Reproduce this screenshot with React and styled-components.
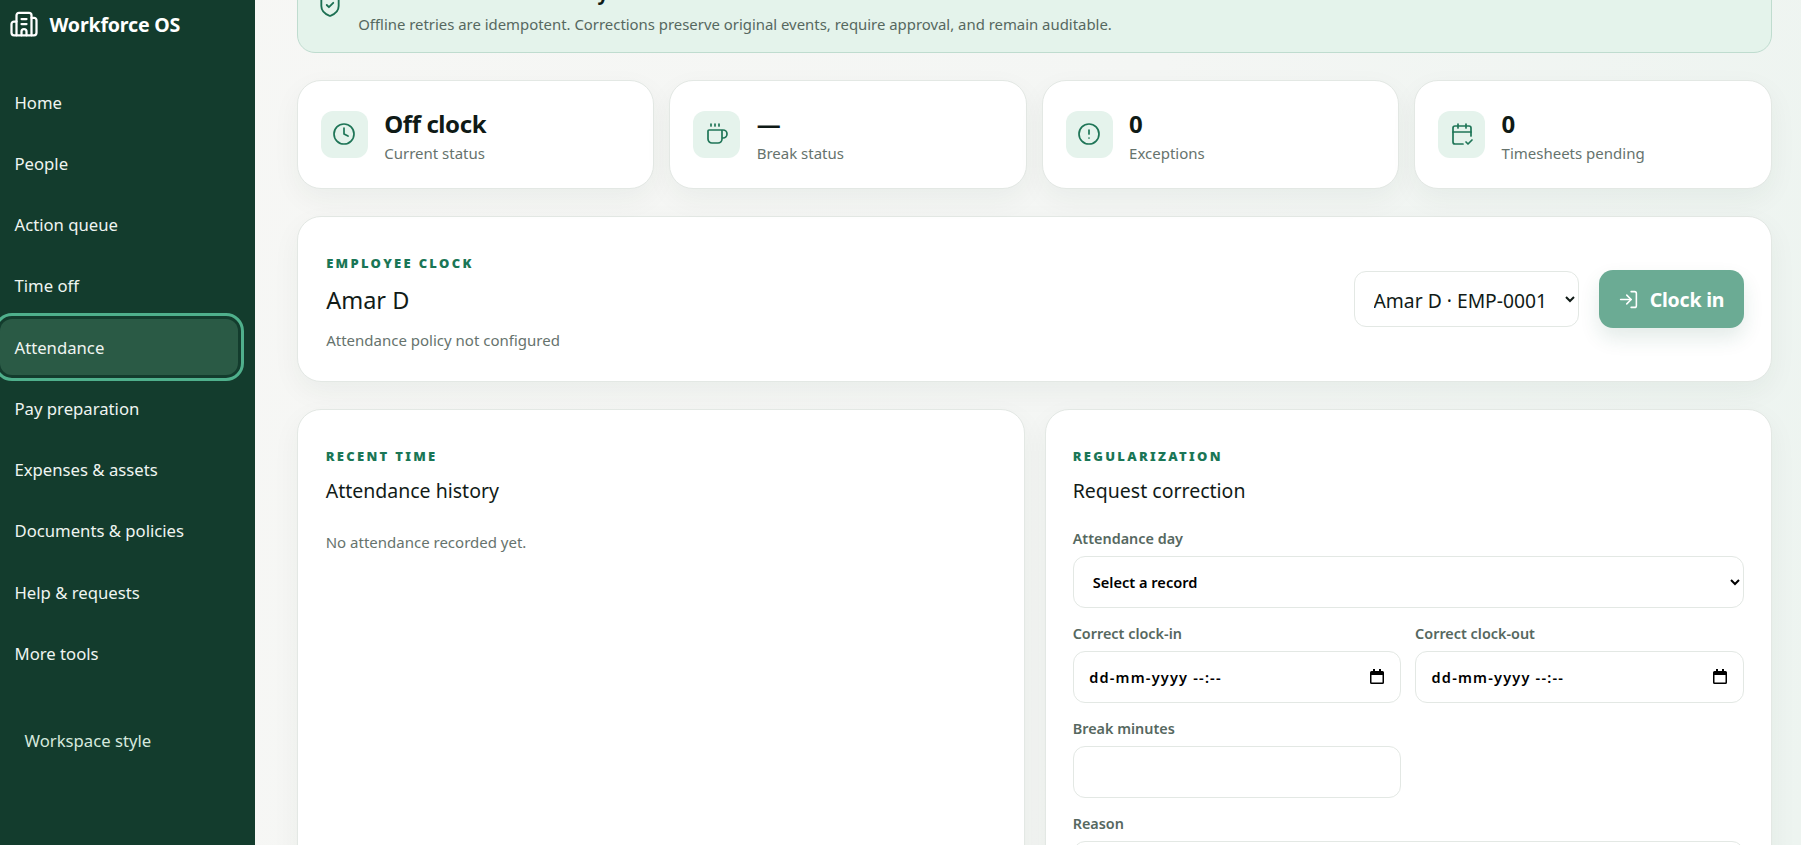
import React from "react";
import styled, { createGlobalStyle } from "styled-components";
import {
   Building2,
   CalendarCheck2,
   CircleAlert,
   Clock,
   Coffee,
   LogIn,
   ShieldCheck
} from "lucide-react";

const GlobalStyle = createGlobalStyle`
   html, body, #root {
      margin: 0;
      height: 100%;
   }
   body {
      font-family: "Noto Sans", "Open Sans", sans-serif;
      color: #111b17;
      overflow: hidden;
   }
   * {
      box-sizing: border-box;
   }
`;

const Shell = styled.div`
   display: flex;
   height: 845px;
   overflow: hidden;
   background: linear-gradient(100deg, #f7f7f5 0%, #f4f6f4 60%, #edf4f0 100%);
`;

const Sidebar = styled.aside`
   flex: 0 0 255px;
   display: flex;
   flex-direction: column;
   background: #133c2d;
   color: #f3f7f4;
`;

const Brand = styled.div`
   display: flex;
   align-items: center;
   gap: 11px;
   height: 48px;
   padding-left: 8.5px;
   font-size: 19.6px;
   font-weight: 700;
   color: #fff;
   letter-spacing: -0.2px;
`;

const Nav = styled.nav`
   display: flex;
   flex-direction: column;
   gap: 5.25px;
   margin-top: 26px;
`;

const NavLink = styled.a`
   display: flex;
   align-items: center;
   width: 238px;
   height: 56px;
   padding-left: 14.5px;
   border-radius: 12px;
   font-size: 16.7px;
   color: #eff5f1;
   background: ${({ $active }) => ($active ? "#2a5a45" : "transparent")};
   outline: ${({ $active }) => ($active ? "3px solid #4fb08c" : "none")};
   outline-offset: 3px;
`;

const StyleLink = styled.div`
   margin-top: 48px;
   padding-left: 24.5px;
   font-size: 16.7px;
   line-height: 24px;
   color: #d6e9de;
`;

const Main = styled.main`
   flex: 1;
   min-width: 0;
   padding-left: 41.7px;
   padding-right: 29.5px;
`;

const Banner = styled.div`
   display: flex;
   gap: 15.5px;
   height: 90px;
   margin-top: -37px;
   padding: 17px 23px 0 19px;
   background: #e4f3eb;
   border: 1px solid #bfdccf;
   border-radius: 18px;
   color: #1c6f52;

   svg {
      flex: none;
      margin-top: 11px;
   }
`;

const BannerTitle = styled.div`
   font-size: 19px;
   line-height: 24px;
   font-weight: 700;
   color: #111b17;
`;

const BannerText = styled.div`
   margin-top: 7.7px;
   font-size: 14.9px;
   line-height: 22px;
   color: #56685f;
`;

const Stats = styled.section`
   display: grid;
   grid-template-columns: repeat(4, 1fr);
   gap: 15px;
   margin-top: 27px;
`;

const Card = styled.div`
   background: #fff;
   border: 1px solid #e3e8e4;
   border-radius: 24px;
   box-shadow: 0 10px 28px rgba(24, 60, 45, 0.05);
`;

const StatCard = styled(Card)`
   display: flex;
   align-items: flex-start;
   gap: 16.5px;
   height: 108.5px;
   padding: 29.5px 23px;
`;

const StatIcon = styled.div`
   flex: 0 0 47px;
   height: 47px;
   display: flex;
   align-items: center;
   justify-content: center;
   border-radius: 12px;
   background: #e5f3ec;
   color: #1f7557;
`;

const StatValue = styled.div`
   font-size: 24px;
   line-height: 26px;
   font-weight: 700;
   letter-spacing: -0.4px;
   color: #0f1a16;
`;

const StatLabel = styled.div`
   margin-top: 6.5px;
   font-size: 15px;
   line-height: 20px;
   color: #66736d;
`;

const ClockCard = styled(Card)`
   display: flex;
   align-items: center;
   justify-content: space-between;
   margin-top: 27.5px;
   height: 165.5px;
   padding: 0 27px 0 28.5px;
`;

const ClockInfo = styled.div`
   padding-top: 7px;
`;

const Eyebrow = styled.div`
   font-size: 13px;
   line-height: 20px;
   font-weight: 900;
   letter-spacing: 2.3px;
   text-transform: uppercase;
   color: #1a7656;
`;

const EmployeeName = styled.div`
   margin-top: 12px;
   font-size: 23.5px;
   line-height: 30px;
   color: #111b17;
`;

const Muted = styled.div`
   margin-top: ${({ $top }) => $top || 0}px;
   font-size: 15px;
   line-height: 22px;
   color: #66736d;
`;

const ClockActions = styled.div`
   display: flex;
   align-items: center;
   gap: 20px;
`;

const EmployeeSelect = styled.select`
   width: 225px;
   height: 56px;
   padding: 3px 4px 0 15px;
   background: #fff;
   border: 1px solid #e3e8e4;
   border-radius: 12px;
   font-family: inherit;
   font-size: 19.3px;
   color: #111b17;
`;

const ClockButton = styled.button`
   display: flex;
   align-items: center;
   justify-content: center;
   gap: 11px;
   width: 145px;
   height: 58px;
   padding-top: 2px;
   border: none;
   border-radius: 14px;
   background: #6bab94;
   box-shadow: 0 10px 20px rgba(24, 90, 65, 0.12);
   color: #fff;
   font-family: inherit;
   font-size: 19.5px;
   font-weight: 700;
   letter-spacing: -0.2px;
`;

const Panels = styled.section`
   display: grid;
   grid-template-columns: 728px 1fr;
   gap: 20px;
   margin-top: 27.5px;
`;

const Panel = styled(Card)`
   height: 620px;
   padding: 36px 27px 0 ${({ $inset }) => $inset}px;
`;

const PanelTitle = styled.div`
   margin-top: 10.5px;
   font-size: 19.5px;
   line-height: 28px;
   color: #111b17;
`;

const FormGrid = styled.div`
   display: grid;
   grid-template-columns: 1fr 1fr;
   column-gap: 14px;
   row-gap: 16px;
   margin-top: 24px;
`;

const Field = styled.label`
   display: flex;
   flex-direction: column;
   gap: 7px;
   grid-column: ${({ $wide }) => ($wide ? "1 / -1" : "auto")};
`;

const FieldLabel = styled.span`
   font-size: 14.4px;
   line-height: 20px;
   font-weight: 600;
   color: #56685f;
`;

const FieldSelect = styled.select`
   height: 52px;
   padding: 1px 4px 0 15px;
   background: #fff;
   border: 1px solid #e3e8e4;
   border-radius: 12px;
   font-family: inherit;
   font-size: 14.6px;
   font-weight: 600;
   color: #000;
`;

const FieldBox = styled.div`
   display: flex;
   align-items: center;
   justify-content: space-between;
   height: 52px;
   padding: 0 16px 0 15.5px;
   background: #fff;
   border: 1px solid #e3e8e4;
   border-radius: 12px;
   font-size: 14.5px;
   font-weight: 600;
   letter-spacing: 1.2px;
   color: #000;
`;

const navItems = [
   "Home",
   "People",
   "Action queue",
   "Time off",
   "Attendance",
   "Pay preparation",
   "Expenses & assets",
   "Documents & policies",
   "Help & requests",
   "More tools"
];

const stats = [
   { icon: Clock, value: "Off clock", label: "Current status" },
   { icon: Coffee, value: "—", label: "Break status" },
   { icon: CircleAlert, value: "0", label: "Exceptions" },
   { icon: CalendarCheck2, value: "0", label: "Timesheets pending" }
];

// the native date picker glyph, solid header with an open body
const PickerGlyph = () => (
   <svg width="14" height="15" viewBox="0 0 14 15" aria-hidden="true">
      <path d="M3 0h2v2h4V0h2v2h1.5A1.5 1.5 0 0 1 14 3.5v10a1.5 1.5 0 0 1-1.5 1.5h-11A1.5 1.5 0 0 1 0 13.5v-10A1.5 1.5 0 0 1 1.5 2H3V0Zm-1.5 6v7.5h11V6h-11Z" fill="#000" />
   </svg>
);

const DateField = ({ label }) => (
   <Field>
      <FieldLabel>{label}</FieldLabel>
      <FieldBox>
         <span>dd-mm-yyyy --:--</span>
         <PickerGlyph />
      </FieldBox>
   </Field>
);

const App = () => {
   return (
      <Shell>
         <GlobalStyle />
         <Sidebar>
            <Brand>
               <Building2 size={30} strokeWidth={1.8} />
               Workforce OS
            </Brand>
            <Nav>
               {navItems.map((item) => (
                  <NavLink key={item} $active={item === "Attendance"}>
                     {item}
                  </NavLink>
               ))}
            </Nav>
            <StyleLink>Workspace style</StyleLink>
         </Sidebar>
         <Main>
            <Banner>
               <ShieldCheck size={26} strokeWidth={1.7} />
               <div>
                  <BannerTitle>Attendance is trustworthy</BannerTitle>
                  <BannerText>
                     Offline retries are idempotent. Corrections preserve original events, require approval, and remain auditable.
                  </BannerText>
               </div>
            </Banner>
            <Stats>
               {stats.map(({ icon: Icon, value, label }) => (
                  <StatCard key={label}>
                     <StatIcon>
                        <Icon size={24} strokeWidth={1.7} />
                     </StatIcon>
                     <div>
                        <StatValue>{value}</StatValue>
                        <StatLabel>{label}</StatLabel>
                     </div>
                  </StatCard>
               ))}
            </Stats>
            <ClockCard>
               <ClockInfo>
                  <Eyebrow>Employee clock</Eyebrow>
                  <EmployeeName>Amar D</EmployeeName>
                  <Muted $top={14}>Attendance policy not configured</Muted>
               </ClockInfo>
               <ClockActions>
                  <EmployeeSelect defaultValue="amar">
                     <option value="amar">Amar D · EMP-0001</option>
                  </EmployeeSelect>
                  <ClockButton disabled>
                     <LogIn size={21} strokeWidth={1.8} />
                     Clock in
                  </ClockButton>
               </ClockActions>
            </ClockCard>
            <Panels>
               <Panel $inset={28}>
                  <Eyebrow>Recent time</Eyebrow>
                  <PanelTitle>Attendance history</PanelTitle>
                  <Muted $top={26}>No attendance recorded yet.</Muted>
               </Panel>
               <Panel $inset={27}>
                  <Eyebrow>Regularization</Eyebrow>
                  <PanelTitle>Request correction</PanelTitle>
                  <FormGrid>
                     <Field $wide>
                        <FieldLabel>Attendance day</FieldLabel>
                        <FieldSelect defaultValue="">
                           <option value="">Select a record</option>
                        </FieldSelect>
                     </Field>
                     <DateField label="Correct clock-in" />
                     <DateField label="Correct clock-out" />
                     <Field>
                        <FieldLabel>Break minutes</FieldLabel>
                        <FieldBox />
                     </Field>
                     <div />
                     <Field $wide>
                        <FieldLabel>Reason</FieldLabel>
                        <FieldBox />
                     </Field>
                  </FormGrid>
               </Panel>
            </Panels>
         </Main>
      </Shell>
   );
};

export default App;
